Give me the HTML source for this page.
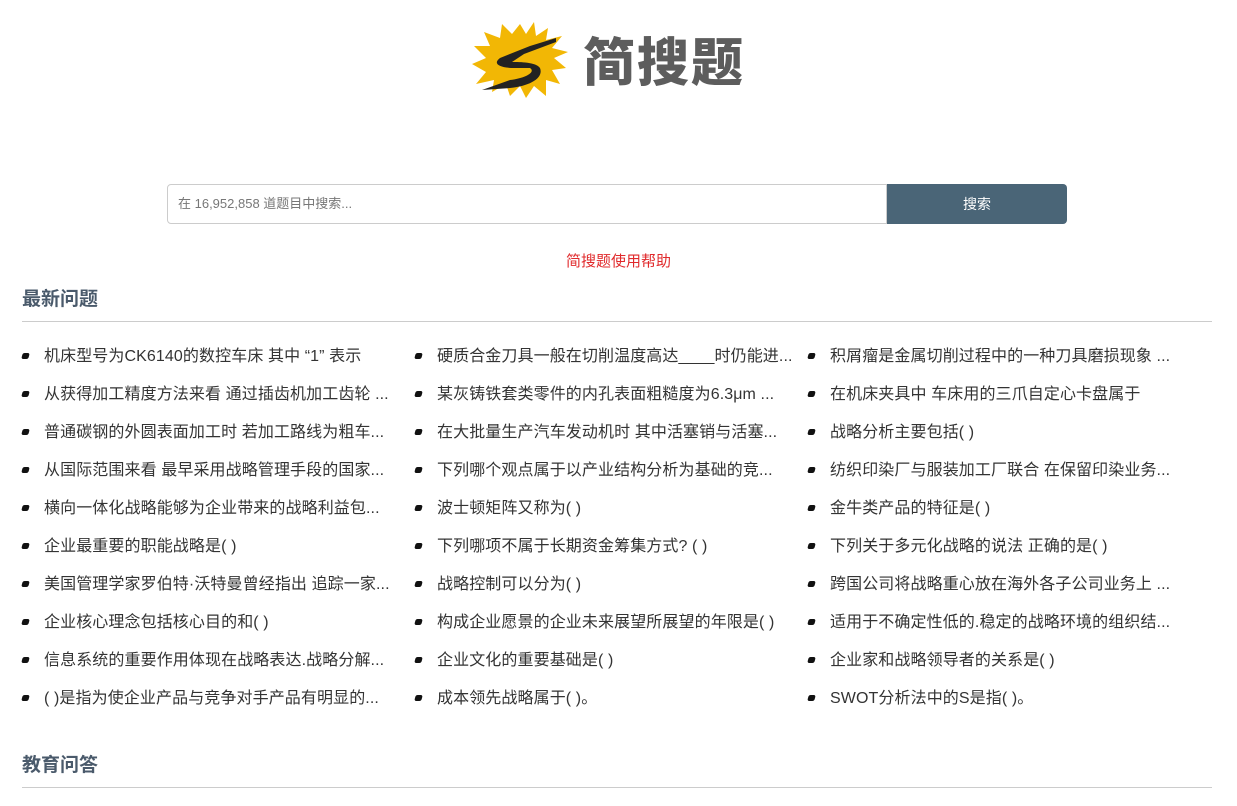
<!DOCTYPE html>
<html><head><meta charset="utf-8"><style>
body{margin:0;background:#fff;font-family:"Liberation Sans","Noto Sans CJK SC",sans-serif;width:1237px;height:806px;overflow:hidden;position:relative}
.abs{position:absolute}
.logo-t{left:583px;top:24px;font-size:52px;font-weight:900;color:#5d5d5d;letter-spacing:2px;line-height:70px;font-family:"Noto Sans CJK SC",sans-serif}
.inp{left:167px;top:184px;border:1px solid #ccc;border-radius:4px 0 0 4px;font-size:13px;color:#777;line-height:38px;padding-left:10px;box-sizing:border-box;width:720px;height:40px}
.btn{left:887px;top:184px;width:180px;height:40px;background:#4a6577;border-radius:0 4px 4px 0;color:#fff;font-size:14px;text-align:center;line-height:40px}
.help{left:0;width:1237px;top:250px;text-align:center;color:#e0292b;font-size:15px}
h2{position:absolute;left:22px;margin:0;font-size:19px;font-weight:bold;color:#4a5a6b;font-family:"Noto Sans CJK SC",sans-serif}
.hr{position:absolute;left:22px;width:1190px;height:1px;background:#ccc}
.it{position:absolute;font-size:16px;letter-spacing:0.1px;color:#333;white-space:nowrap;line-height:20px}
.it:before{content:"";position:absolute;left:-22px;top:6px;width:7px;height:6px;background:#111;border-radius:2px;transform:skewX(-15deg)}
</style></head><body>
<svg class="abs" style="left:470px;top:18px" width="100" height="82" viewBox="0 0 100 82">
<polygon fill="#f2b705" points="50,6 56,16 64,4 66,18 78,10 76,22 92,18 82,30 98,34 84,40 96,50 82,52 90,66 76,62 76,78 64,68 56,80 50,68 40,78 36,66 22,74 24,62 6,66 16,54 2,46 16,40 4,28 20,28 14,14 30,20 32,6 42,16"/>
<path d="M86,20 L60,28 L30,40 C22,46 30,50 44,50 L60,50 C66,54 56,60 40,62 L12,72 L40,70 C60,68 74,60 70,50 C66,44 50,44 42,44 L54,36 L86,24 Z" fill="#222"/>
</svg>
<div class="abs logo-t">简搜题</div>
<div class="abs inp">在 16,952,858 道题目中搜索...</div>
<div class="abs btn">搜索</div>
<div class="abs help">简搜题使用帮助</div>
<h2 style="top:284px">最新问题</h2>
<div class="hr" style="top:321px"></div>
<div class="it" style="left:44px;top:347px">机床型号为CK6140的数控车床 其中 “1” 表示</div>
<div class="it" style="left:437px;top:347px">硬质合金刀具一般在切削温度高达____时仍能进...</div>
<div class="it" style="left:830px;top:347px">积屑瘤是金属切削过程中的一种刀具磨损现象 ...</div>
<div class="it" style="left:44px;top:385px">从获得加工精度方法来看 通过插齿机加工齿轮 ...</div>
<div class="it" style="left:437px;top:385px">某灰铸铁套类零件的内孔表面粗糙度为6.3μm ...</div>
<div class="it" style="left:830px;top:385px">在机床夹具中 车床用的三爪自定心卡盘属于</div>
<div class="it" style="left:44px;top:423px">普通碳钢的外圆表面加工时 若加工路线为粗车...</div>
<div class="it" style="left:437px;top:423px">在大批量生产汽车发动机时 其中活塞销与活塞...</div>
<div class="it" style="left:830px;top:423px">战略分析主要包括( )</div>
<div class="it" style="left:44px;top:461px">从国际范围来看 最早采用战略管理手段的国家...</div>
<div class="it" style="left:437px;top:461px">下列哪个观点属于以产业结构分析为基础的竞...</div>
<div class="it" style="left:830px;top:461px">纺织印染厂与服装加工厂联合 在保留印染业务...</div>
<div class="it" style="left:44px;top:499px">横向一体化战略能够为企业带来的战略利益包...</div>
<div class="it" style="left:437px;top:499px">波士顿矩阵又称为( )</div>
<div class="it" style="left:830px;top:499px">金牛类产品的特征是( )</div>
<div class="it" style="left:44px;top:537px">企业最重要的职能战略是( )</div>
<div class="it" style="left:437px;top:537px">下列哪项不属于长期资金筹集方式? ( )</div>
<div class="it" style="left:830px;top:537px">下列关于多元化战略的说法 正确的是( )</div>
<div class="it" style="left:44px;top:575px">美国管理学家罗伯特·沃特曼曾经指出 追踪一家...</div>
<div class="it" style="left:437px;top:575px">战略控制可以分为( )</div>
<div class="it" style="left:830px;top:575px">跨国公司将战略重心放在海外各子公司业务上 ...</div>
<div class="it" style="left:44px;top:613px">企业核心理念包括核心目的和( )</div>
<div class="it" style="left:437px;top:613px">构成企业愿景的企业未来展望所展望的年限是( )</div>
<div class="it" style="left:830px;top:613px">适用于不确定性低的.稳定的战略环境的组织结...</div>
<div class="it" style="left:44px;top:651px">信息系统的重要作用体现在战略表达.战略分解...</div>
<div class="it" style="left:437px;top:651px">企业文化的重要基础是( )</div>
<div class="it" style="left:830px;top:651px">企业家和战略领导者的关系是( )</div>
<div class="it" style="left:44px;top:689px">( )是指为使企业产品与竞争对手产品有明显的...</div>
<div class="it" style="left:437px;top:689px">成本领先战略属于( )。</div>
<div class="it" style="left:830px;top:689px">SWOT分析法中的S是指( )。</div>
<h2 style="top:750px">教育问答</h2>
<div class="hr" style="top:787px"></div>
</body></html>
